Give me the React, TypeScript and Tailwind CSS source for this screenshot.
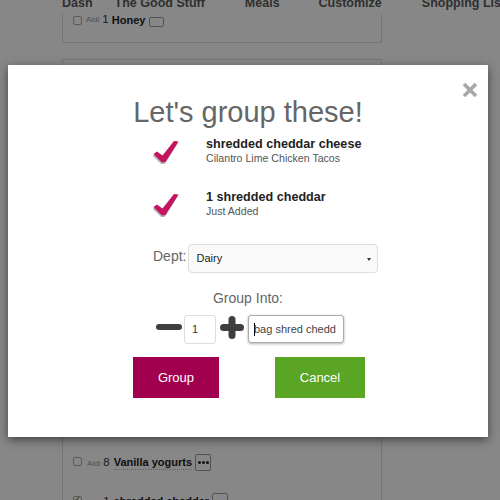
import React from "react";

function Check() {
  return (
    <svg width="26" height="24" viewBox="0 0 26 24" className="block">
      <polygon points="0.5,15 4,12.5 9.5,16.5 21,2 25.5,2.5 12.5,23 9,23.5" fill="#777" opacity="0.55" transform="translate(-0.6,0.8)" />
      <polygon points="0.5,14 4,11.5 9.5,15.5 21,1 25.5,1.5 12.5,22 9,22.5" fill="#c4145f" />
    </svg>
  );
}

function Dots() {
  return (
    <div className="flex h-[17px] w-[16px] items-center justify-center gap-[1px] rounded-[2px] border border-[#999] bg-white">
      <div className="h-[3px] w-[3px] rounded-full bg-[#222]" />
      <div className="h-[3px] w-[3px] rounded-full bg-[#222]" />
      <div className="h-[3px] w-[3px] rounded-full bg-[#222]" />
    </div>
  );
}

function ListRow({ qty, name, checked }: { qty: string; name: string; checked?: boolean }) {
  return (
    <div className="ml-[10px] flex h-[17px] items-center whitespace-nowrap">
      <div className="mb-[3px] flex h-[9px] w-[9px] items-center justify-center rounded-[2px] border border-[#aaa] bg-white text-[8px] leading-none text-[#222]">
        {checked ? "✓" : ""}
      </div>
      <span className="ml-[5px] mt-[2px] text-[8px] leading-[10px] text-[#999]">Aldi</span>
      <span className="ml-[3px] text-[11.5px] leading-[13px] text-[#333]">{qty}</span>
      <span className="ml-[4px] border-b border-dotted border-[#bbb] text-[11px] font-bold leading-[13px] text-[#222]">{name}</span>
      <div className="ml-[3px]">
        <Dots />
      </div>
    </div>
  );
}

export default function App() {
  return (
    <div className="relative h-[500px] w-[500px] overflow-hidden bg-white font-['Liberation_Sans',Arial,sans-serif]">
      {/* fixed header */}
      <div className="absolute inset-x-0 top-0 z-10 h-[14px] overflow-hidden bg-white">
        <div className="-mt-[5px] flex h-[16px] whitespace-nowrap text-[12.5px] font-bold leading-[16px] text-[#5a5a5a]">
          <span className="ml-[62px] shrink-0">Dash</span>
          <span className="ml-[22px] shrink-0">The Good Stuff</span>
          <span className="ml-[40px] shrink-0">Meals</span>
          <span className="ml-[39px] shrink-0">Customize</span>
          <span className="ml-[40px] shrink-0">Shopping List</span>
        </div>
      </div>

      {/* page content */}
      <div className="flex flex-col">
        <div className="-mt-[20px] ml-[62px] h-[63px] w-[320px] border border-[#ddd]">
          <div className="mt-[32px] ml-[10px] flex h-[14px] items-center whitespace-nowrap">
            <div className="h-[9px] w-[9px] rounded-[2px] border border-[#aaa]" />
            <span className="ml-[4px] text-[8px] text-[#999]">Aldi</span>
            <span className="ml-[3px] text-[11.5px] text-[#333]">1</span>
            <span className="ml-[3px] text-[11px] font-bold text-[#222]">Honey</span>
            <div className="ml-[4px] mt-[4px] h-[10px] w-[15px] rounded-[2px] border border-[#999]" />
          </div>
        </div>
        <div className="ml-[62px] mt-[16px] h-[460px] w-[320px] border border-[#ddd] pt-[394px]">
          <ListRow qty="8" name="Vanilla yogurts" />
          <div className="mt-[22px]">
            <ListRow qty="1" name="shredded cheddar" checked />
          </div>
        </div>
      </div>

      {/* overlay */}
      <div className="absolute inset-0 z-20 bg-black/[0.47]" />

      {/* modal */}
      <div className="absolute left-[8px] top-[65px] z-30 flex h-[372px] w-[480px] flex-col bg-white shadow-[0_3px_9px_rgba(0,0,0,0.5)]">
        <svg className="absolute right-[10px] top-[17px]" width="16" height="16" viewBox="0 0 16 16">
          <path d="M2 2 L14 14 M14 2 L2 14" stroke="#a8a8a8" strokeWidth="3.6" strokeLinecap="butt" />
        </svg>

        <div className="mt-[31px] h-[32px] text-center text-[29px] leading-[32px] text-[#666]">Let's group these!</div>

        <div className="ml-[145px] mt-[9px] flex">
          <div className="mt-[3px] w-[53px]">
            <Check />
          </div>
          <div className="flex flex-col">
            <span className="text-[12.6px] font-bold leading-[15px] text-[#222]">shredded cheddar cheese</span>
            <span className="text-[10.6px] leading-[13px] text-[#555]">Cilantro Lime Chicken Tacos</span>
          </div>
        </div>

        <div className="ml-[145px] mt-[25px] flex">
          <div className="mt-[3px] w-[53px]">
            <Check />
          </div>
          <div className="flex flex-col">
            <span className="text-[12.6px] font-bold leading-[15px] text-[#222]">1 shredded cheddar</span>
            <span className="text-[10.6px] leading-[13px] text-[#555]">Just Added</span>
          </div>
        </div>

        <div className="ml-[145px] mt-[26px] flex items-start">
          <span className="mt-[4px] text-[14px] leading-[16px] text-[#666]">Dept:</span>
          <div className="ml-[2px] flex h-[29px] w-[190px] items-center justify-between rounded-[4px] border border-[#ddd] bg-[#fafafa] pl-[7px] pr-[6px]">
            <span className="text-[11px] text-[#222]">Dairy</span>
            <div className="mt-[1px] h-0 w-0 border-x-[2px] border-t-[3px] border-x-transparent border-t-[#333]" />
          </div>
        </div>

        <div className="mt-[17px] h-[16px] text-center text-[14px] leading-[16px] text-[#666]">Group Into:</div>

        <div className="ml-[148px] mt-[9px] flex items-start">
          <svg className="mt-[9px]" width="26" height="6" viewBox="0 0 26 6">
            <rect x="0" y="0" width="26" height="6" rx="3" fill="#3f3f3f" />
          </svg>
          <div className="ml-[2px] flex h-[29px] w-[32px] items-center rounded-[3px] border border-[#ddd] bg-white pl-[7px] text-[11px] text-[#333]">1</div>
          <svg className="ml-[4px] mt-[1px]" width="24" height="23" viewBox="0 0 24 23">
            <rect x="0" y="8" width="24" height="7" rx="3.5" fill="#3f3f3f" />
            <rect x="8.5" y="0" width="7" height="23" rx="3.5" fill="#3f3f3f" />
          </svg>
          <div className="ml-[4px] flex h-[28px] w-[96px] items-center overflow-hidden whitespace-nowrap rounded-[3px] border border-[#aaa] bg-white pl-[5px] text-[11px] text-[#444] shadow-[0_1px_3px_rgba(0,0,0,0.3)]">
            <span className="-mr-[1px] h-[13px] w-px bg-black" />
            <span>bag shred chedd</span>
          </div>
        </div>

        <div className="ml-[125px] mt-[13px] flex">
          <div className="flex h-[41px] w-[86px] items-center justify-center bg-[#a1004f] text-[13px] text-white">Group</div>
          <div className="ml-[56px] flex h-[41px] w-[90px] items-center justify-center bg-[#5aa523] text-[13px] text-white">Cancel</div>
        </div>
      </div>
    </div>
  );
}
